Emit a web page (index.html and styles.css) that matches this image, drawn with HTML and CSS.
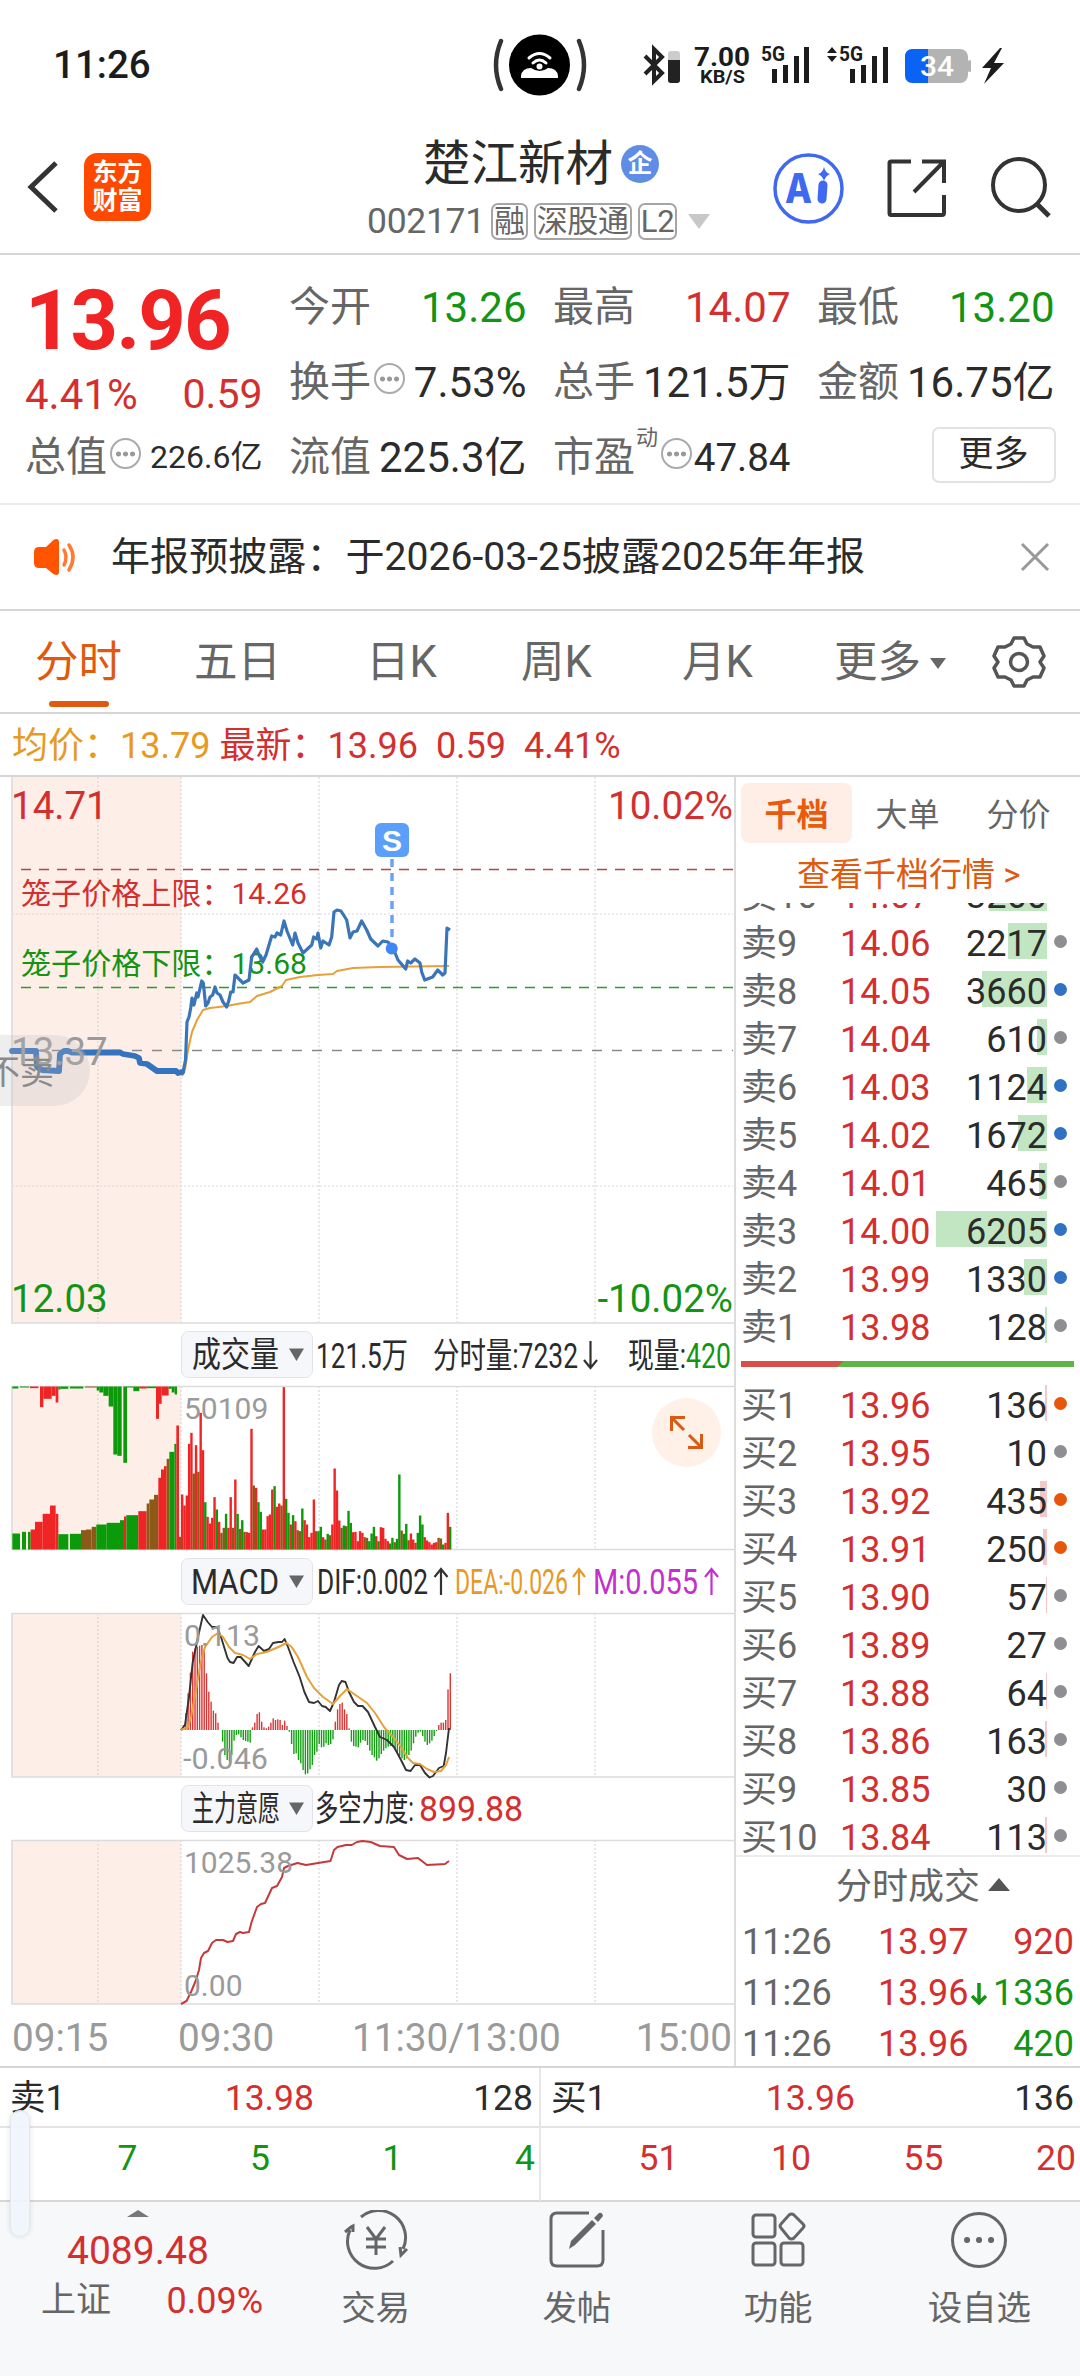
FILE: index.html
```
<!DOCTYPE html>
<html lang="zh-CN">
<head>
    <meta charset="UTF-8">
    <meta name="viewport" content="width=device-width, initial-scale=1.0">
    <title>楚江新材 002171</title>
    <link rel="stylesheet" href="styles.css">
</head>
<body>
    <div class="status-bar">
        <span class="clock">11:26</span>
        <svg class="island" width="94" height="62" viewBox="493 34 94 62">
            <path d="M501 41Q491 65 501 89M579 41Q589 65 579 89" fill="none" stroke="#333" stroke-width="4.5" stroke-linecap="round"/>
            <circle cx="539.500" cy="65" r="30.500"/>
            <g fill="none" stroke="#fff" stroke-width="3" stroke-linecap="round"><path d="M529 58Q539.500 49 550 58M533 63Q539.500 57 546 63"/></g>
            <path d="M521 78V76Q522 68 531 68Q540 74 548 68Q557 68 558 76V78Z" fill="#fff"/>
            <circle cx="539.500" cy="66.500" r="3" fill="#fff"/>
        </svg>
        <svg class="status-icons" width="370" height="44" viewBox="640 43 370 44">
            <path d="M645 56L662 73L654 81V49L662 57L645 74" fill="none" stroke="#222" stroke-width="4"/>
            <rect x="668" y="51" width="12" height="32" rx="3" fill="#ccc"/><path d="M668 60H680V80Q680 83 677 83H671Q668 83 668 80Z" fill="#222"/>
            <text x="694" y="66" font-size="26" font-weight="700" textLength="56" lengthAdjust="spacingAndGlyphs">7.00</text>
            <text x="700" y="83" font-size="18" font-weight="700" textLength="45" lengthAdjust="spacingAndGlyphs">KB/S</text>
            <text x="761" y="61" font-size="20" font-weight="700" textLength="24" lengthAdjust="spacingAndGlyphs">5G</text>
            <path d="M772 69h5v14h-5zM783 65h5v18h-5zM794 56h5v27h-5zM804 47h5v36h-5z"/>
            <path d="M827 53l5-6 5 6zM827 56l5 6 5-6z"/>
            <text x="839" y="61" font-size="20" font-weight="700" textLength="24" lengthAdjust="spacingAndGlyphs">5G</text>
            <path d="M850 69h5v14h-5zM861 65h5v18h-5zM872 56h5v27h-5zM883 47h5v36h-5z"/>
            <rect x="905" y="49" width="63" height="34" rx="8" fill="#b3b3b3"/><path d="M928 49H913Q905 49 905 57V75Q905 83 913 83H928Z" fill="#0b63f6"/>
            <rect x="968" y="60" width="3" height="12" rx="1.500" fill="#b3b3b3"/>
            <text x="920" y="76" font-size="28" font-weight="500" textLength="34" lengthAdjust="spacingAndGlyphs" class="on-battery">34</text>
            <path d="M1000 48L982 68H991L984 84L1004 63H994L1002 48Z"/>
        </svg>
    </div>

    <header class="header">
        <svg class="back" width="36" height="56" viewBox="0 0 36 56"><path d="M31 4L6 28L31 52" fill="none" stroke="#333" stroke-width="5"/></svg>
        <div class="app-logo">东方<br>财富</div>
        <div class="stock">
            <div class="stock-name">楚江新材<span class="corp">企</span></div>
            <div class="stock-code">002171<span class="tag">融</span><span class="tag">深股通</span><span class="tag">L2</span><i class="caret"></i></div>
        </div>
        <svg class="head-icons" width="290" height="76" viewBox="770 149 290 76">
            <circle cx="808.500" cy="187.500" r="33.500" fill="#fff" stroke="#4069f2" stroke-width="3.500"/>
            <text x="785" y="202" class="ai" textLength="27" lengthAdjust="spacingAndGlyphs">A</text>
            <path d="M823 184L822 198" stroke="#4069f2" stroke-width="9" stroke-linecap="round"/>
            <path d="M824 166Q825.500 172 830 173Q825.500 175 824 180Q822.500 175 818 173Q822.500 172 824 166Z" fill="#4069f2"/>
            <g fill="none" stroke="#333" stroke-width="4"><path d="M911 160.500H891Q889.500 160.500 889.500 162V212Q889.500 214 891 214H942Q944 214 944 212V194M922 160.500H944V182M944 160.500L914 191"/>
            <circle cx="1019" cy="184" r="26"/><path d="M1036 202L1049 215" stroke-width="5"/></g>
        </svg>
    </header>

    <section class="quote">
        <div class="price-block">
            <div class="price">13.96</div>
            <div class="change"><span>4.41%</span><span>0.59</span></div>
        </div>
        <div class="item"><label>今开</label><b class="down">13.26</b></div>
        <div class="item"><label>最高</label><b class="up">14.07</b></div>
        <div class="item"><label>最低</label><b class="down">13.20</b></div>
        <div class="item"><label>换手<i class="more"></i></label><b>7.53%</b></div>
        <div class="item"><label>总手</label><b>121.5万</b></div>
        <div class="item"><label>金额</label><b>16.75亿</b></div>
        <div class="item small"><label>总值<i class="more"></i></label><b>226.6亿</b></div>
        <div class="item"><label>流值</label><b>225.3亿</b></div>
        <div class="item pe"><label>市盈<sup>动</sup><i class="more"></i></label><b>47.84</b></div>
        <div class="item end"><button class="more-btn">更多</button></div>
    </section>

    <div class="notice">
        <svg width="46" height="38" viewBox="0 0 46 38"><path d="M5 9H12L20 1.500Q25 0 25 4V34Q25 38 20 36.500L12 30H5Q0 30 0 25V14Q0 9 5 9Z" fill="#ff5500"/><path d="M30 12Q34 19 30 27M35 7Q43 19 35 32" fill="none" stroke="#ff7a33" stroke-width="3.500" stroke-linecap="round"/></svg>
        <p>年报预披露：于2026-03-25披露2025年年报</p>
        <svg class="close" width="30" height="30" viewBox="0 0 30 30"><path d="M2 2L28 28M28 2L2 28" stroke="#999" stroke-width="3"/></svg>
    </div>

    <nav class="periods">
        <a class="active">分时</a><a>五日</a><a>日K</a><a>周K</a><a>月K</a><a>更多<i></i></a>
        <svg width="54" height="54" viewBox="-27 -27 54 54" fill="none" stroke="#555" stroke-width="3.500" stroke-linejoin="round"><path d="M-5 -24H5L8 -18L14 -15L21 -15L25 -6L21 0L25 6L21 15L14 15L8 18L5 24H-5L-8 18L-14 15L-21 15L-25 6L-21 0L-25 -6L-21 -15L-14 -15L-8 -18Z"/><circle r="8.500"/></svg>
    </nav>

    <div class="latest"><span class="avg">均价：13.79</span><span>最新：13.96</span><span>0.59</span><span>4.41%</span></div>

    <main class="board">
        <div class="charts">
            <svg class="chart" height="548" viewBox="0 777 735 548">
                <rect x="12" y="777" width="169" height="546" class="pre"/>
                <path class="grid" d="M98 777V1322M181 777V1322M319 777V1322M457 777V1322M595 777V1322M12 914H733M12 1186H733"/>
                <path class="frame" d="M12 777V1323H734"/>
                <path d="M21 869.500H733" class="limit up-line"/>
                <path d="M21 987.500H733" class="limit down-line"/>
                <path d="M12 1050.500H733" class="base-line"/>
                <text x="21" y="904" class="cage up" textLength="286" lengthAdjust="spacingAndGlyphs">笼子价格上限：14.26</text>
                <text x="21" y="974" class="cage down" textLength="286" lengthAdjust="spacingAndGlyphs">笼子价格下限：13.68</text>
                <polyline class="avg-line" points="182,1076 185,1070 188,1050 192,1032 197,1020 203,1010 210,1008 227,1006 237,1004 250,1002 257,996 270,992 282,986 286,980 300,977 318,975 333,974 337,971 353,968 380,967 449,966"/>
                <polyline class="auction-line" points="12,1051 36,1051 37,1067 42,1070 59,1071 60,1054 64,1051 68,1051 72,1052.500 120,1052.500 123,1054 135,1056 139,1058 140,1063 147,1064 157,1071 176,1071 178,1073 182,1072"/>
                <polyline class="price-line" points="183,1072 185.500,1060 187,1022 189,1017 190.700,1008 192,998 194,1005 196.700,993 198,997 201.700,981 203.300,983 205.700,1006 208,1003 210,997 212.700,995 215,987 217,993 220,995 223,1002 226.700,1007 229,1000 230.700,992 233,992 235,975 238,978 243,983 249,980 251.700,957 256.700,949 259,955 262.700,962 266,955 271.700,936 275,937 277,933 280.700,935 284,921 287,931 292.700,945 295,933 298,943 303,953 311.700,945 313.700,937 316.700,939 318,933 320.700,948 323,941 329,945 331.700,937 334,912 337,910 341,911 346.700,920 350,938 353,932 357,931 361.700,921 366.700,930 370.700,939 378,946 382.700,941 388,942 393,948 398,960 405.700,969 407.700,961 410.700,963 415,959 420,963 421.700,972 424.700,980 432.700,977 437.700,970 442.700,975 445,973 447,928 450,930"/>
                <path d="M392 859V943" class="signal"/>
                <circle cx="391.700" cy="948.500" r="6" fill="#3f86f5"/>
                <rect x="375" y="823" width="34" height="34" rx="6" fill="#5c9ffb"/>
                <text x="392" y="851" class="signal-tag">S</text>
                <g class="scale">
                    <text x="11" y="819" class="up">14.71</text><text x="733" y="819" text-anchor="end" class="up">10.02%</text>
                    <text x="11" y="1065" class="muted">13.37</text>
                    <text x="11" y="1312" class="down">12.03</text><text x="733" y="1312" text-anchor="end" class="down">-10.02%</text>
                </g>
            </svg>
            <div class="side-tag">不卖</div>

            <svg class="chart" height="227" viewBox="0 1325 735 227">
                <rect x="181.500" y="1331.500" width="131" height="46" rx="7" class="pick"/>
                <text x="192" y="1367" class="label" textLength="87" lengthAdjust="spacingAndGlyphs">成交量</text>
                <path d="M289 1348.500H304L296.500 1361Z" fill="#666"/>
                <text x="316" y="1368" class="label" textLength="92" lengthAdjust="spacingAndGlyphs">121.5万</text>
                <text x="433" y="1368" class="label" textLength="145" lengthAdjust="spacingAndGlyphs">分时量:7232</text>
                <path d="M590.500 1341V1368M584 1360L590.500 1368L597 1360" class="arrow"/>
                <text x="628" y="1368" class="label" textLength="58" lengthAdjust="spacingAndGlyphs">现量:</text>
                <text x="686" y="1368" class="label down" textLength="45" lengthAdjust="spacingAndGlyphs">420</text>
                <rect x="12" y="1386" width="169" height="164" class="pre"/>
                <path class="grid" d="M98 1386V1549M181 1386V1549M319 1386V1549M457 1386V1549M595 1386V1549"/>
                <path class="frame" d="M734 1386.500H12V1549.500H734"/>
                <text x="184" y="1419" class="mark">50109</text>
                <g id="volume"></g>
                <circle cx="686.500" cy="1432.500" r="34.500" fill="#fff0e8"/>
                <path d="M684 1430L672 1418M671.500 1431V1417.500H685M689 1435L701 1447M701.500 1434V1447.500H688" fill="none" stroke="#d95a12" stroke-width="3"/>
            </svg>

            <svg class="chart" height="228" viewBox="0 1552 735 228">
                <rect x="181.500" y="1558.500" width="131" height="46" rx="7" class="pick"/>
                <text x="191" y="1594" class="label" textLength="88" lengthAdjust="spacingAndGlyphs">MACD</text>
                <path d="M289 1575.500H304L296.500 1588Z" fill="#666"/>
                <text x="317" y="1594" class="label" textLength="111" lengthAdjust="spacingAndGlyphs">DIF:0.002</text>
                <path d="M441 1595V1569M434.500 1577L441 1569L447.500 1577" class="arrow"/>
                <text x="455" y="1594" class="label avg" textLength="113" lengthAdjust="spacingAndGlyphs">DEA:-0.026</text>
                <path d="M579 1595V1569M573 1577L579 1569L585 1577" class="arrow arrow-avg"/>
                <text x="593" y="1594" class="label macd" textLength="105" lengthAdjust="spacingAndGlyphs">M:0.055</text>
                <path d="M711.500 1595V1569M705 1577L711.500 1569L718 1577" class="arrow arrow-macd"/>
                <rect x="12" y="1613" width="169" height="164" class="pre"/>
                <path class="grid" d="M98 1613V1777M181 1613V1777M319 1613V1777M457 1613V1777M595 1613V1777"/>
                <path class="frame" d="M734 1613.500H12V1777H734"/>
                <g id="macd"></g>
                <polyline class="dif-line" points="181,1730 185,1725 189,1697 192.600,1663 198,1637 203,1615 207.700,1622 212,1627 217,1627 221,1637 227.500,1658 230,1662 233.600,1663 237,1657 240.700,1657 248.700,1666 255,1652 258.600,1646 264,1651 269,1649 273,1643 278.500,1642 282,1642 284.600,1639 288,1647 293.600,1662 299.700,1677 304.400,1692 309,1702 314,1703 318,1701 322,1706 325.700,1707 330,1711 334,1702 339,1685 341.700,1681 345.500,1682 349,1692 354,1702 358,1706 362.500,1706 368,1712 375,1727 380,1737 387,1740 394,1747 401,1760 406,1770 410.600,1771 415,1765 420,1765 425,1773 429.500,1777.500 433,1776 439,1768 443.700,1766 446,1753 449,1728"/>
                <polyline class="avg-line" points="181,1730 188,1727 191,1717 196,1690 200.600,1663 205,1647 212,1637 218,1633 223,1637 229,1647 235,1653 243,1655 250,1659 257,1654 266.700,1652 278.500,1647 286.500,1643 291.700,1647 298,1657 307,1677 314,1688 323,1697 333,1704 340,1696 347,1689 354,1694 367,1703 375,1713 384.700,1728 394,1738 401,1747 408,1758 413,1763 420,1764 427,1769 434,1772 441,1771 446,1765 449,1757"/>
                <text x="184" y="1646" class="mark" textLength="76" lengthAdjust="spacingAndGlyphs">0.113</text><text x="183" y="1769" class="mark" textLength="85" lengthAdjust="spacingAndGlyphs">-0.046</text>
            </svg>

            <svg class="chart" height="227" viewBox="0 1780 735 227">
                <rect x="181.500" y="1785.500" width="131" height="46" rx="7" class="pick"/>
                <text x="192" y="1821" class="label" textLength="88" lengthAdjust="spacingAndGlyphs">主力意愿</text>
                <path d="M289 1802.500H304L296.500 1815Z" fill="#666"/>
                <text x="315" y="1821" class="label" textLength="99" lengthAdjust="spacingAndGlyphs">多空力度:</text>
                <text x="419" y="1821" class="label up" textLength="104" lengthAdjust="spacingAndGlyphs">899.88</text>
                <rect x="12" y="1840" width="169" height="164" class="pre"/>
                <path class="grid" d="M98 1840V2004M181 1840V2004M319 1840V2004M457 1840V2004M595 1840V2004"/>
                <path class="frame" d="M734 1840.500H12V2004H734"/>
                <polyline class="force-line" points="181,2004 186.500,2001 191,1992 196,1980 199,1970 201,1958 204,1953 208,1951 212,1943 216,1940 223,1940 227.500,1942 233,1941 236,1934 240,1932 243,1933 249,1932 251.600,1922 257,1907 261,1904 265,1903 272,1888 277,1886 282,1877 284,1868 288,1866 297.500,1863 306,1865 330.500,1861 334,1850 337.500,1847 346,1845 351.700,1845 357,1842 362.500,1841 370.600,1842 380,1846 394,1847 399,1855 407,1859 418,1858 427,1865 445,1864 449,1861"/>
                <text x="184" y="1873" class="mark" textLength="109" lengthAdjust="spacingAndGlyphs">1025.38</text><text x="184" y="1996" class="mark">0.00</text>
            </svg>

            <div class="axis"><span>09:15</span><span>09:30</span><span>11:30/13:00</span><span>15:00</span></div>
        </div>

        <aside class="depth">
            <div class="depth-tabs"><a class="active">千档</a><a>大单</a><a>分价</a></div>
            <div class="depth-link">查看千档行情 &gt;</div>
            <div class="orders sell" id="sell"></div>
            <div class="ratio"></div>
            <div class="orders buy" id="buy"></div>
            <div class="ticks-title">分时成交<i></i></div>
            <div class="tick"><span>11:26</span><b>13.97</b><em class="up">920</em></div>
            <div class="tick"><span>11:26</span><b>13.96</b><svg width="18" height="24" viewBox="0 0 18 24"><path d="M9 1V21M2 14L9 21L16 14" fill="none" stroke="#149414" stroke-width="3.500"/></svg><em class="down">1336</em></div>
            <div class="tick"><span>11:26</span><b>13.96</b><em class="down">420</em></div>
        </aside>
    </main>

    <section class="level">
        <div class="level-row"><span>卖1</span><b>13.98</b><span>128</span></div>
        <div class="level-row"><span>买1</span><b>13.96</b><span>136</span></div>
        <div class="queue down"><span>7</span><span>5</span><span>1</span><span>4</span></div>
        <div class="queue up"><span>51</span><span>10</span><span>55</span><span>20</span></div>
        <i class="edge-handle"></i>
    </section>

    <footer class="toolbar">
        <div class="index">
            <i></i>
            <div class="index-value">4089.48</div>
            <div class="index-change"><span>上证</span><b>0.09%</b></div>
        </div>
        <a><svg width="66" height="60" viewBox="-33 -30 66 60"><path d="M-15 -23A27 27 0 0 1 27 9M-26 -10A27 27 0 0 0 17 21M-31 -8L-25 -13L-23 -14V-8M31 9L25 15L24 7M-9 -13L0 -1L9 -13M0 -1V15M-10 -1H10M-10 7H10"/></svg>交易</a>
        <a><svg width="66" height="60" viewBox="-33 -30 66 60"><path d="M12 -27H-20Q-26 -27 -26 -21V20Q-26 26 -20 26H20Q26 26 26 20V-10"/><path d="M-8 9L-6 1L15 -20L19 -16L-2 5ZM17 -22L22 -27Q25 -28 26 -24L21 -18Z" fill="#666" stroke="none"/></svg>发帖</a>
        <a><svg width="66" height="60" viewBox="-33 -30 66 60"><rect x="-25" y="-25" width="22" height="22" rx="3"/><path d="M11 -25Q13.500 -27 16 -25L25 -16Q27 -14 25 -12L16 -2Q13.500 0 11 -2L3 -12Q1 -14 3 -16Z"/><rect x="-25" y="3" width="22" height="22" rx="3"/><rect x="3" y="3" width="22" height="22" rx="3"/></svg>功能</a>
        <a><svg width="66" height="60" viewBox="-33 -30 66 60"><circle r="26.500"/><path d="M-12 0h.1M0 0h.1M12 0h.1" stroke-width="6" stroke-linecap="round"/></svg>设自选</a>
    </footer>

    <script>
        const COLORS = { r: '#ee2524', g: '#0a9a0a', m: '#8b5a18' };

        // minute volume: colour + height
        const minutes = 'r165 r132 r162 r317 r350 m228 r313 m233 r410 r298 g142 r98 r78 r95 r157 g120 r83 m50 m65 g107 r65 r157 m65 r210 g107 m62 g88 m53 r52 r50 r362 m192 r185 g142 g113 r60 r60 r100 r105 r180 g190 r128 r138 m132 r487 g152 g110 r75 g103 r85 m58 m55 g123 r88 r75 r37 r50 r150 m55 g55 g68 r37 m30 g47 m43 r75 r243 r177 r87 m65 g72 m70 g116 g80 r52 r53 r25 r55 r50 m37 m35 g25 g48 g68 r40 g25 r67 r65 r32 r25 g18 g35 m22 g32 g225 m57 g47 g77 m28 r48 r30 r20 g50 g102 g75 r37 r27 r22 r15 r20 r22 m35 m33 g15 r20 r110 g68'.split(' ');

        // call auction: start, end, height, colour
        const matched = [[37,60,48,'g'],[66,78,53,'g'],[84,92,53,'g'],[92,105,60,'r'],[105,128,83,'r'],[128,150,107,'r'],[150,167,132,'r'],[167,175,107,'r'],[175,205,46,'g'],[210,243,47,'g'],[243,258,58,'m'],[258,275,60,'m'],[275,289,68,'m'],[289,320,75,'g'],[320,360,80,'g'],[360,372,88,'g'],[372,379,99,'r'],[379,415,103,'g'],[415,440,115,'r'],[440,448,138,'m'],[448,462,150,'m'],[462,475,164,'m'],[475,483,215,'r'],[483,492,240,'r'],[492,500,250,'r'],[500,508,272,'m'],[508,523,293,'g'],[523,529,317,'g'],[529,537,372,'r'],[537,543,38,'m']];
        const unmatched = [[37,55,6,'g'],[60,88,3,'g'],[90,115,5,'r'],[120,130,62,'r'],[130,155,37,'r'],[155,167,28,'r'],[167,175,48,'r'],[175,182,9,'g'],[182,205,7,'g'],[210,250,6,'g'],[255,290,3,'m'],[290,298,12,'g'],[298,310,18,'g'],[310,326,28,'g'],[326,340,60,'g'],[340,352,204,'g'],[352,365,208,'g'],[370,381,229,'g'],[381,400,3,'g'],[400,418,14,'g'],[418,440,6,'r'],[440,468,5,'g'],[468,477,97,'r'],[477,485,52,'r'],[485,506,27,'r'],[506,515,7,'g'],[515,524,18,'g'],[524,531,24,'g']];

        const macd = [2,15,50,110,172,235,245,250,253,255,243,170,115,85,58,50,22,0,-35,-75,-90,-95,-75,-32,-15,-13,-22,-30,-33,-35,-38,8,22,48,53,25,8,5,10,22,35,30,32,30,15,28,12,-5,-42,-72,-70,-90,-100,-120,-133,-130,-118,-105,-75,-65,-42,-52,-50,-40,-45,-42,-28,25,62,78,82,62,48,5,-35,-48,-50,-52,-38,-30,-33,-45,-62,-75,-82,-92,-85,-72,-62,-55,-50,-48,-50,-55,-68,-78,-85,-90,-85,-75,-62,-40,-20,-8,-5,-18,-35,-45,-40,-32,-18,-3,15,22,22,30,122,170];

        const rect = (x, y, w, h, fill) => `<rect x="${x.toFixed(2)}" y="${y.toFixed(2)}" width="${w.toFixed(2)}" height="${h.toFixed(2)}" fill="${fill}"/>`;

        document.getElementById('volume').innerHTML =
            matched.map(([a, b, h, c]) => rect(a / 3, 1549.5 - h / 3, (b - a) / 3, h / 3, COLORS[c])).join('') +
            unmatched.map(([a, b, h, c]) => rect(a / 3, 1386.5, (b - a) / 3, h / 3, COLORS[c])).join('') +
            minutes.map((m, i) => rect(181 + i * 2.31, 1549.5 - m.slice(1) / 3, 2.4, m.slice(1) / 3, COLORS[m[0]])).join('');

        document.getElementById('macd').innerHTML =
            macd.map((v, i) => rect(180.5 + i * 2.3, v > 0 ? 1730 - v / 3 : 1730, 1.4, Math.abs(v) / 3, v > 0 ? '#dc3535' : '#12a012')).join('');

        // name, price, volume, depth bar width, dot
        const sell = [['卖10','14.07',3260,58,''],['卖9','14.06',2217,39,'grey'],['卖8','14.05',3660,65,'blue'],['卖7','14.04',610,10,'grey'],['卖6','14.03',1124,20,'blue'],['卖5','14.02',1672,29,'blue'],['卖4','14.01',465,8,'grey'],['卖3','14.00',6205,111,'blue'],['卖2','13.99',1330,23,'blue'],['卖1','13.98',128,2,'grey']];
        const buy = [['买1','13.96',136,2,'orange'],['买2','13.95',10,0,'grey'],['买3','13.92',435,7,'orange'],['买4','13.91',250,4,'orange'],['买5','13.90',57,1,'grey'],['买6','13.89',27,0,'grey'],['买7','13.88',64,1,'grey'],['买8','13.86',163,2,'grey'],['买9','13.85',30,0,'grey'],['买10','13.84',113,2,'grey']];

        const renderOrders = (id, rows) => {
            document.getElementById(id).innerHTML = rows.map(([name, price, vol, width, dot]) =>
                `<div class="order"><span>${name}</span><b>${price}</b><em><i style="width:${width}px"></i>${vol}</em><u class="${dot}"></u></div>`).join('');
        };
        renderOrders('sell', sell);
        renderOrders('buy', buy);
    </script>
</body>
</html>
```
FILE: styles.css
```
:root {
    --up: #d42f2f; --down: #149414; --avg: #e69a24; --orange: #e0590f;
    --text: #2b2b2b; --label: #666; --muted: #9a9a9a; --line: #d6d6d6;
}
* { box-sizing: border-box; }
body { margin: 0; width: 1080px; height: 2376px; overflow: hidden; background: #fff; color: var(--text); font-family: Roboto, "Noto Sans CJK SC", sans-serif; font-size: 36px; }
svg { display: block; flex: none; }
b { font-weight: 400; }
em, i { font-style: normal; }
.up { color: var(--up); fill: var(--up); }
.down { color: var(--down); fill: var(--down); }
.avg { color: var(--avg); fill: var(--avg); }

/* status bar */
.status-bar { height: 128px; padding: 34px 70px 32px 53px; display: flex; align-items: center; }
.clock { width: 440px; font-size: 38.5px; font-weight: 500; color: #1c1c1c; line-height: 60px; }
.status-icons { margin-left: 53px; fill: #1c1c1c; }
.on-battery { fill: #fff; }

/* header */
.header { height: 127px; padding-left: 24px; display: flex; border-bottom: 2px solid var(--line); }
.back { margin: 31px 0 0 1px; }
.app-logo { width: 67px; height: 68px; margin: 25px 0 0 23px; padding-top: 6px; border-radius: 13px; background: #ff4800; color: #fff; font-size: 25px; font-weight: 700; line-height: 28px; text-align: center; }
.stock { width: 619px; }
.stock-name { display: flex; align-items: center; height: 66px; margin-left: 272px; padding-top: 6px; font-size: 47.5px; line-height: 60px; }
.corp { width: 38px; height: 38px; margin-left: 8px; border-radius: 50%; background: #5f8de6; color: #fff; font-size: 25px; font-weight: 700; line-height: 37px; text-align: center; }
.stock-code { display: flex; align-items: center; margin: 7px 0 0 216px; font-size: 35.5px; line-height: 40px; color: var(--label); letter-spacing: -.3px; }
.tag { height: 37px; padding: 0 1px; margin-left: 6px; border: 2px solid #a5a5a5; border-radius: 7px; font-size: 31px; line-height: 33px; letter-spacing: -.3px; }
.caret { margin-left: 11px; border: 11px solid transparent; border-top: 15px solid #c8c8c8; border-bottom: 0; }
.head-icons { margin-top: 22px; }
.ai { font-family: Inter, Roboto, sans-serif; font-size: 41px; font-weight: 800; fill: #4069f2; }

/* quote */
.quote { height: 250px; padding: 15px 25px 0; border-bottom: 2px solid #ebebeb; display: grid; grid-template-columns: repeat(4, 237.5px); grid-template-rows: repeat(3, 75px); column-gap: 26.5px; }
.price-block { grid-row: span 2; color: var(--up); }
.price { height: 100px; line-height: 102px; font-size: 83px; font-weight: 700; color: #f02424; letter-spacing: -2px; }
.change { display: flex; justify-content: space-between; line-height: 49px; font-size: 42px; }
.change span:last-child { font-size: 41px; }
.item { display: flex; justify-content: space-between; align-items: center; font-size: 42px; line-height: 75px; white-space: nowrap; }
.item label { display: flex; align-items: center; color: var(--label); font-size: 41px; }
.item.small b { font-size: 32px; }
.item.pe b { font-size: 38.5px; }
.item.end { justify-content: flex-end; }
.item sup { width: 22px; align-self: flex-start; font-size: 22px; line-height: 36px; margin-left: 1px; }
.more { width: 31px; height: 31px; margin: -8px 0 0 3px; border: 2.5px solid #aaa; border-radius: 50%; background: radial-gradient(circle, #999 2.2px, transparent 2.8px) center / 7px 26px repeat-x; background-clip: content-box; padding: 0 3px; }
.more-btn { width: 124px; height: 56px; margin: -6px -1px 0 0; padding: 0; border: 2px solid #e2e2e2; border-radius: 7px; background: #fff; color: var(--text); font: inherit; font-size: 35px; line-height: 50px; }

/* notice */
.notice { height: 106px; padding: 0 30px 0 34px; display: flex; align-items: center; border-bottom: 2px solid var(--line); }
.notice p { flex: 1; margin: 0 0 0 31px; font-size: 39.1px; line-height: 60px; }

/* period tabs */
.periods { height: 103px; display: grid; grid-template-columns: 194px 172px 155px 161px 152px 158px 1fr; align-items: center; border-bottom: 2px solid var(--line); color: var(--label); font-size: 43.5px; line-height: 101px; white-space: nowrap; }
.periods a { padding-top: 1px; }
.periods .active { position: relative; padding-left: 35px; color: var(--orange); }
.periods .active::after { content: ""; position: absolute; left: 49px; bottom: 6px; width: 60px; height: 6px; border-radius: 3px; background: var(--orange); }
.periods i { display: inline-block; margin: 0 0 8px 9px; border: 8px solid transparent; border-top: 11px solid #666; border-bottom: 0; }
.latest { height: 63px; padding: 1px 0 0 12px; display: flex; border-bottom: 2px solid var(--line); color: var(--up); font-size: 36px; line-height: 62px; }
.latest span { margin-right: 18px; }
.latest .avg { margin-right: 9px; color: var(--avg); }

/* charts */
.board { position: relative; height: 1291px; display: flex; border-bottom: 2px solid var(--line); }
.charts { width: 736px; border-right: 2px solid #dcdcdc; }
.chart { width: 735px; }
.pre { fill: #fdeee8; }
.grid { fill: none; stroke: #d8d8d8; stroke-width: 1.2; stroke-dasharray: 2 2; }
.frame { fill: none; stroke: #dcdcdc; stroke-width: 1.6; }
.limit { fill: none; stroke-width: 1.3; stroke-dasharray: 10 8; }
.up-line { stroke: #b84545; }
.down-line { stroke: #2c9c2c; }
.base-line { fill: none; stroke: #8a8a8a; stroke-width: 1.6; stroke-dasharray: 10 10; }
.cage { font-size: 29.7px; }
.scale text { font-size: 38.5px; }
.scale .muted, .mark { fill: var(--muted); }
.mark { font-size: 30px; }
.avg-line, .price-line, .auction-line, .dif-line, .force-line { fill: none; stroke-linejoin: round; }
.avg-line { stroke: #e5a13a; stroke-width: 2; }
.price-line { stroke: #3a75b8; stroke-width: 3.2; }
.auction-line { stroke: #3473be; stroke-width: 5.8; stroke-linecap: round; }
.dif-line { stroke: #333; stroke-width: 1.9; }
.force-line { stroke: #c43a3a; stroke-width: 2; }
.signal { stroke: #6ba3f2; stroke-width: 3.5; stroke-dasharray: 8 6; }
.signal-tag { font-family: "Liberation Sans", sans-serif; font-size: 30px; font-weight: 700; fill: #fff; text-anchor: middle; }
.pick { fill: #f6f7fa; stroke: #e1e3e6; }
.label { font-size: 35px; }
.label:not(.up):not(.down):not(.avg):not(.macd) { fill: var(--text); }
.macd { fill: #c430cc; }
.arrow { fill: none; stroke: #333; stroke-width: 2.2; }
.arrow-avg { stroke: var(--avg); }
.arrow-macd { stroke: #c430cc; }
.side-tag { position: absolute; left: 0; top: 258px; width: 90px; height: 71px; border-radius: 0 36px 36px 0; background: rgba(190, 190, 190, .26); color: #8a8a8a; font-size: 34px; line-height: 75px; text-indent: -14px; overflow: hidden; white-space: nowrap; }
.axis { height: 59px; padding: 0 2px 0 12px; display: grid; grid-template-columns: 166px 174px 1fr auto; color: var(--muted); font-size: 38.7px; line-height: 61px; }

/* order book */
.depth { width: 344px; font-size: 36px; }
.depth-tabs { display: flex; margin: 6px 0 0 5px; }
.depth-tabs a { width: 111px; height: 60px; color: var(--label); font-size: 32px; line-height: 64px; text-align: center; }
.depth-tabs .active { border-radius: 8px; background: #ffeee6; color: #ea5a0c; font-weight: 700; }
.depth-link { height: 60px; padding-left: 61px; color: var(--orange); font-size: 33px; line-height: 63px; white-space: nowrap; }
.orders { overflow: hidden; }
.sell { height: 449px; display: flex; flex-direction: column; justify-content: flex-end; }
.buy { height: 475px; border-bottom: 2px solid #ececec; }
.order { flex: none; height: 48px; padding-left: 5px; display: grid; grid-template-columns: 99px 96px 111px 1fr; align-items: center; line-height: 48px; }
.order span { color: var(--label); }
.order b { color: var(--up); }
.order em { position: relative; z-index: 0; text-align: right; }
.order em i { position: absolute; z-index: -1; right: 0; top: 3px; height: 36px; background: #c1e6c1; }
.buy .order em i { background: #f5c8c8; }
.order u { width: 13px; height: 13px; margin: -5px 0 0 7px; border-radius: 50%; }
.grey { background: #8e8e93; }
.blue { background: #2f72c4; }
.orange { background: #e8560a; }
.ratio { width: 333px; height: 6px; margin: 9px 5px 15px; background: linear-gradient(135deg, #d9504a 72px, #5fb548 73px); }
.ticks-title { height: 60px; padding-left: 30px; display: flex; align-items: center; justify-content: center; color: var(--label); line-height: 61px; }
.ticks-title i { margin: -6px 0 0 8px; border: 11px solid transparent; border-bottom: 13px solid #555; border-top: 0; }
.tick { height: 51px; padding: 0 6px 0 6px; display: flex; align-items: center; line-height: 51px; }
.tick span { width: 136px; color: var(--label); }
.tick b { color: var(--up); }
.tick em { margin-left: auto; }
.tick svg { margin-left: 2px; }

/* level one */
.level { position: relative; height: 134px; display: grid; grid-template-columns: 541px 539px; grid-template-rows: 60px 73px; border-bottom: 2px solid var(--line); font-size: 35.500px; }
.level > div { border-right: 2px solid #e6e6e6; }
.level > div:nth-child(2n) { border-right: 0; }
.level-row { padding: 0 6px 0 10px; display: flex; justify-content: space-between; border-bottom: 2px solid #e4e4e4; line-height: 61px; }
.level-row b { color: var(--up); }
.queue { padding-left: 5px; display: grid; grid-template-columns: repeat(4, 132.5px); text-align: right; line-height: 60px; }
.edge-handle { position: absolute; left: 10px; top: 42px; width: 20px; height: 127px; border-radius: 10px; background: rgba(240, 244, 252, .9); border: 1px solid #e4e7ee; box-shadow: 0 0 5px rgba(0, 0, 0, .12); }

/* toolbar */
.toolbar { height: 176px; display: flex; background: #f7f8fa; color: var(--label); font-size: 34.5px; }
.index { width: 275px; padding-top: 8px; color: var(--up); }
.index > i { display: block; width: 0; margin-left: 127px; border: 11px solid transparent; border-bottom: 7px solid #777; border-top: 0; }
.index-value { height: 66px; padding-left: 67px; font-size: 39px; line-height: 68px; }
.index-change { display: flex; justify-content: space-between; padding: 0 12px 0 41px; font-size: 36px; line-height: 36px; }
.index-change span { color: var(--label); font-size: 35px; }
.toolbar a { flex: 1; padding-top: 8px; display: flex; flex-direction: column; align-items: center; line-height: 77px; }
.toolbar svg { fill: none; stroke: #666; stroke-width: 3; }
```
